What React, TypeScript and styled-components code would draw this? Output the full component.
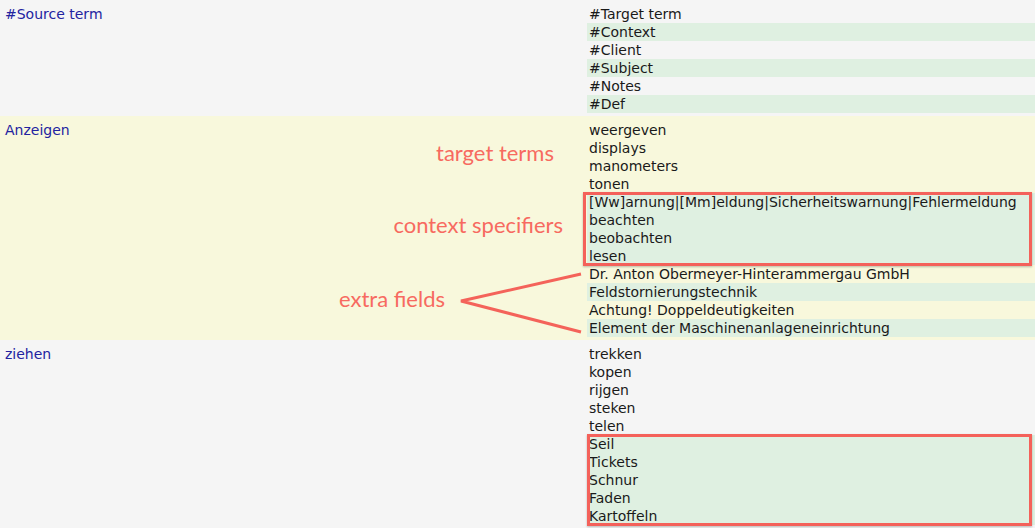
import styled, { createGlobalStyle } from "styled-components";

const GlobalStyle = createGlobalStyle`
  html, body {
    margin: 0;
    padding: 0;
    background: #f5f5f5;
  }
  body {
    font-family: "DejaVu Sans", Verdana, sans-serif;
    font-size: 14px;
    color: #1a1a1a;
  }
`;

const Sheet = styled.div`
  width: 1035px;
  height: 528px;
  overflow: hidden;
  display: flex;
  flex-direction: column;
`;

const Row = styled.div<{ $tone: "grey" | "yellow" }>`
  position: relative;
  display: grid;
  grid-template-columns: 587px 1fr;
  padding: 5px 0 3px;
  background: ${(p) => (p.$tone === "yellow" ? "#f8f8dc" : "#f5f5f5")};
`;

const SourceCell = styled.div`
  padding-left: 5px;
  line-height: 18px;
  color: #2323a0;
`;

const TargetCell = styled.div`
  display: flex;
  flex-direction: column;
`;

const Line = styled.div<{ $striped?: boolean }>`
  height: 18px;
  line-height: 18px;
  padding-left: 2px;
  white-space: nowrap;
  background: ${(p) => (p.$striped ? "#dff0e1" : "transparent")};
`;

const ContextGroup = styled.div<{ $left: number }>`
  position: relative;
  &::after {
    content: "";
    position: absolute;
    top: -1px;
    bottom: -1px;
    left: ${(p) => p.$left}px;
    right: 3px;
    border: 3px solid #f4615a;
    box-shadow: 0 1px 2px rgba(0, 0, 0, 0.25);
    pointer-events: none;
  }
`;

const Callout = styled.div<{ $top: number; $right: number }>`
  position: absolute;
  top: ${(p) => p.$top}px;
  right: ${(p) => p.$right}px;
  font-family: Lato, "Open Sans", sans-serif;
  font-size: 22px;
  line-height: 24px;
  color: #f76a60;
  white-space: nowrap;
`;

const Pointer = styled.svg`
  position: absolute;
  left: 455px;
  top: 150px;
  overflow: visible;
`;

type Entry = {
  source: string;
  targets: string[];
  context: string[];
  extras?: string[];
  boxLeft?: number;
  header?: boolean;
};

const entries: Entry[] = [
  {
    source: "#Source term",
    targets: ["#Target term"],
    context: [],
    extras: ["#Context", "#Client", "#Subject", "#Notes", "#Def"],
    header: true,
  },
  {
    source: "Anzeigen",
    targets: ["weergeven", "displays", "manometers", "tonen"],
    context: [
      "[Ww]arnung|[Mm]eldung|Sicherheitswarnung|Fehlermeldung",
      "beachten",
      "beobachten",
      "lesen",
    ],
    extras: [
      "Dr. Anton Obermeyer-Hinterammergau GmbH",
      "Feldstornierungstechnik",
      "Achtung! Doppeldeutigkeiten",
      "Element der Maschinenanlageneinrichtung",
    ],
    boxLeft: -4,
  },
  {
    source: "ziehen",
    targets: ["trekken", "kopen", "rijgen", "steken", "telen"],
    context: ["Seil", "Tickets", "Schnur", "Faden", "Kartoffeln"],
    boxLeft: 0,
  },
];

export default function App() {
  return (
    <>
      <GlobalStyle />
      <Sheet>
        {entries.map((entry, i) => (
          <Row key={entry.source} $tone={i % 2 === 1 ? "yellow" : "grey"}>
            <SourceCell>{entry.source}</SourceCell>
            <TargetCell>
              {entry.targets.map((t) => (
                <Line key={t}>{t}</Line>
              ))}
              {entry.context.length > 0 && (
                <ContextGroup $left={entry.boxLeft ?? 0}>
                  {entry.context.map((c) => (
                    <Line key={c} $striped>
                      {c}
                    </Line>
                  ))}
                </ContextGroup>
              )}
              {entry.extras?.map((x, j) => (
                <Line key={x} $striped={entry.header ? j % 2 === 0 : j % 2 === 1}>
                  {x}
                </Line>
              ))}
            </TargetCell>
            {i === 1 && (
              <>
                <Callout $top={25} $right={481}>target terms</Callout>
                <Callout $top={97} $right={472}>context specifiers</Callout>
                <Callout $top={171} $right={590}>extra fields</Callout>
                <Pointer width="130" height="70" viewBox="0 0 130 70">
                  <polyline
                    points="126,8 6,35 126,66"
                    fill="none"
                    stroke="#f4635a"
                    strokeWidth="3"
                    strokeLinejoin="miter"
                  />
                </Pointer>
              </>
            )}
          </Row>
        ))}
      </Sheet>
    </>
  );
}
